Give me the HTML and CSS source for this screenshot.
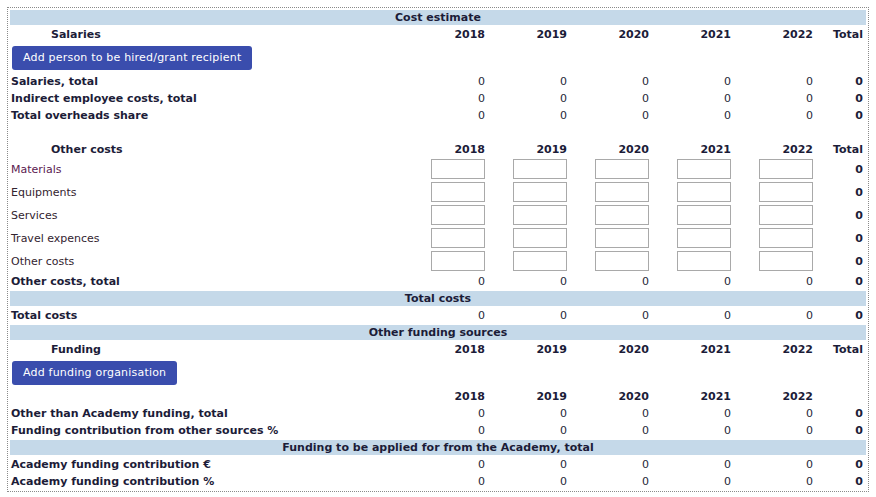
FILE: index.html
```html
<!DOCTYPE html>
<html lang="en">
<head>
<meta charset="utf-8">
<title>Cost estimate</title>
<link rel="stylesheet" href="styles.css">
</head>
<body>
<div class="frame">
<table class="budget">
<colgroup>
<col class="c-label"><col class="c-year"><col class="c-year"><col class="c-year"><col class="c-year"><col class="c-year"><col class="c-total">
</colgroup>
<tbody>
<tr class="band"><th colspan="7">Cost estimate</th></tr>
<tr class="head"><th class="sub">Salaries</th><th>2018</th><th>2019</th><th>2020</th><th>2021</th><th>2022</th><th class="tot">Total</th></tr>
<tr class="btnrow"><td colspan="7"><button class="btn" type="button">Add person to be hired/grant recipient</button></td></tr>
<tr class="sum"><th class="lbl">Salaries, total</th><td>0</td><td>0</td><td>0</td><td>0</td><td>0</td><td class="tot">0</td></tr>
<tr class="sum"><th class="lbl">Indirect employee costs, total</th><td>0</td><td>0</td><td>0</td><td>0</td><td>0</td><td class="tot">0</td></tr>
<tr class="sum"><th class="lbl">Total overheads share</th><td>0</td><td>0</td><td>0</td><td>0</td><td>0</td><td class="tot">0</td></tr>
<tr class="empty"><td colspan="7"></td></tr>
<tr class="head"><th class="sub">Other costs</th><th>2018</th><th>2019</th><th>2020</th><th>2021</th><th>2022</th><th class="tot">Total</th></tr>
<tr class="inrow"><td class="lbl-n first">Materials</td><td><input type="text"></td><td><input type="text"></td><td><input type="text"></td><td><input type="text"></td><td><input type="text"></td><td class="tot">0</td></tr>
<tr class="inrow"><td class="lbl-n">Equipments</td><td><input type="text"></td><td><input type="text"></td><td><input type="text"></td><td><input type="text"></td><td><input type="text"></td><td class="tot">0</td></tr>
<tr class="inrow"><td class="lbl-n">Services</td><td><input type="text"></td><td><input type="text"></td><td><input type="text"></td><td><input type="text"></td><td><input type="text"></td><td class="tot">0</td></tr>
<tr class="inrow"><td class="lbl-n">Travel expences</td><td><input type="text"></td><td><input type="text"></td><td><input type="text"></td><td><input type="text"></td><td><input type="text"></td><td class="tot">0</td></tr>
<tr class="inrow"><td class="lbl-n">Other costs</td><td><input type="text"></td><td><input type="text"></td><td><input type="text"></td><td><input type="text"></td><td><input type="text"></td><td class="tot">0</td></tr>
<tr class="sum"><th class="lbl">Other costs, total</th><td>0</td><td>0</td><td>0</td><td>0</td><td>0</td><td class="tot">0</td></tr>
<tr class="band"><th colspan="7">Total costs</th></tr>
<tr class="sum"><th class="lbl">Total costs</th><td>0</td><td>0</td><td>0</td><td>0</td><td>0</td><td class="tot">0</td></tr>
<tr class="band"><th colspan="7">Other funding sources</th></tr>
<tr class="head"><th class="sub">Funding</th><th>2018</th><th>2019</th><th>2020</th><th>2021</th><th>2022</th><th class="tot">Total</th></tr>
<tr class="btnrow"><td colspan="7"><button class="btn" type="button">Add funding organisation</button></td></tr>
<tr class="head"><th></th><th>2018</th><th>2019</th><th>2020</th><th>2021</th><th>2022</th><th class="tot"></th></tr>
<tr class="sum"><th class="lbl">Other than Academy funding, total</th><td>0</td><td>0</td><td>0</td><td>0</td><td>0</td><td class="tot">0</td></tr>
<tr class="sum"><th class="lbl">Funding contribution from other sources %</th><td>0</td><td>0</td><td>0</td><td>0</td><td>0</td><td class="tot">0</td></tr>
<tr class="band"><th colspan="7">Funding to be applied for from the Academy, total</th></tr>
<tr class="sum"><th class="lbl">Academy funding contribution €</th><td>0</td><td>0</td><td>0</td><td>0</td><td>0</td><td class="tot">0</td></tr>
<tr class="sum"><th class="lbl">Academy funding contribution %</th><td>0</td><td>0</td><td>0</td><td>0</td><td>0</td><td class="tot">0</td></tr>
</tbody>
</table>
</div>
</body>
</html>
```
FILE: styles.css
```css
html, body {
  margin: 0;
  padding: 0;
  background: #ffffff;
}
body {
  font-family: "DejaVu Sans", Verdana, sans-serif;
  font-size: 11px;
  color: #1f1f3d;
  padding: 7px 7px 0 7px;
}
.frame {
  border: 1px dotted #8a8a8a;
}
.budget {
  width: 100%;
  table-layout: fixed;
  border-collapse: separate;
  border-spacing: 2px;
}
.c-label { width: 394px; }
.c-year { width: 80px; }
.c-total { width: 50px; }
.budget th,
.budget td {
  padding: 1px;
  line-height: 13px;
  height: 13px;
  text-align: right;
  white-space: nowrap;
  vertical-align: middle;
}
.budget th { font-weight: bold; color: #1c1c38; }
.budget td { font-weight: normal; color: #262638; }
.band th {
  background: #c5d9e9;
  text-align: center;
  color: #1c1c38;
}
.head th.sub {
  text-align: left;
  padding-left: 41px;
}
.budget .tot {
  padding-right: 3px;
  font-weight: bold;
  color: #1c1c38;
}
.budget th.lbl {
  text-align: left;
}
.budget td.lbl-n {
  text-align: left;
  color: #33242f;
}
.budget td.first { color: #5a2050; }
.btnrow td {
  text-align: left;
  padding: 1px;
  height: 26px;
}
.btn {
  display: block;
  margin: 0 0 0 1px;
  height: 24px;
  padding: 0 11px;
  background: #3a4dad;
  color: #ffffff;
  border: none;
  border-radius: 3px;
  font-family: "DejaVu Sans", Verdana, sans-serif;
  font-size: 11px;
  letter-spacing: 0.2px;
  line-height: 24px;
}
.budget .inrow td {
  height: 20px;
  padding: 0 1px 1px 1px;
}
.budget .inrow td.tot {
  padding: 0 3px 1px 1px;
}
.inrow input {
  display: block;
  margin-left: auto;
  box-sizing: border-box;
  width: 54px;
  height: 20px;
  border: 1px solid #a9a9a9;
  padding: 0;
  background: #fff;
}
.empty td { height: 13px; }
```
